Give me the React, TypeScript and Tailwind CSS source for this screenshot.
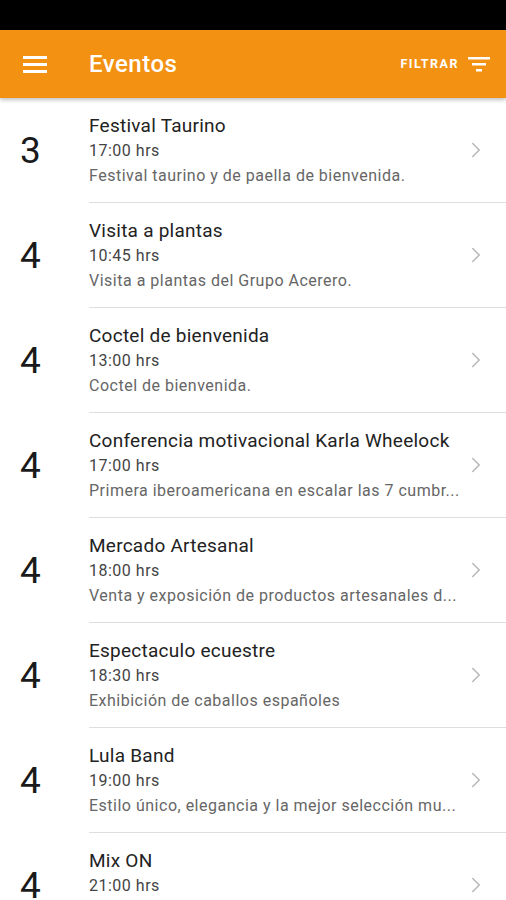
import { ChevronRight } from 'lucide-react';

const events = [
  { day: '3', title: 'Festival Taurino', time: '17:00 hrs', desc: 'Festival taurino y de paella de bienvenida.' },
  { day: '4', title: 'Visita a plantas', time: '10:45 hrs', desc: 'Visita a plantas del Grupo Acerero.' },
  { day: '4', title: 'Coctel de bienvenida', time: '13:00 hrs', desc: 'Coctel de bienvenida.' },
  { day: '4', title: 'Conferencia motivacional Karla Wheelock', time: '17:00 hrs', desc: 'Primera iberoamericana en escalar las 7 cumbr...' },
  { day: '4', title: 'Mercado Artesanal', time: '18:00 hrs', desc: 'Venta y exposición de productos artesanales d...' },
  { day: '4', title: 'Espectaculo ecuestre', time: '18:30 hrs', desc: 'Exhibición de caballos españoles' },
  { day: '4', title: 'Lula Band', time: '19:00 hrs', desc: 'Estilo único, elegancia y la mejor selección mu...' },
  { day: '4', title: 'Mix ON', time: '21:00 hrs', desc: '' },
];

const App = () => {
  return (
    <div className="w-[506px] h-[900px] overflow-hidden bg-white font-['Roboto',sans-serif]">
      {/* Status bar */}
      <div className="h-[30px] bg-black" />

      {/* Toolbar */}
      <header className="relative z-10 h-[68px] bg-[#f39112] flex items-center shadow-[0_2px_4px_rgba(0,0,0,0.25)]">
        <div className="w-[89px] pl-[23px]">
          <div className="flex flex-col gap-[4px] w-[24px]">
            <span className="h-[3px] bg-white" />
            <span className="h-[3px] bg-white" />
            <span className="h-[3px] bg-white" />
          </div>
        </div>
        <h1 className="text-white text-[24px] font-medium tracking-[0.5px] leading-none">Eventos</h1>
        <div className="ml-auto flex items-center pr-[16px]">
          <span className="text-white text-[12.5px] font-bold tracking-[1.5px]">FILTRAR</span>
          <svg width="22" height="15" viewBox="0 0 22 15" className="ml-[9px]">
            <rect x="0" y="0" width="22" height="2.5" fill="white" />
            <rect x="4" y="6" width="14" height="2.5" fill="white" />
            <rect x="8" y="12" width="6" height="2.5" fill="white" />
          </svg>
        </div>
      </header>

      {/* List */}
      <ul>
        {events.map((e, i) => (
          <li key={i} className="flex h-[105px]">
            <div className="w-[89px] flex items-center pl-[20px]">
              <span className="text-[37px] text-[#1a1a1a] leading-none">{e.day}</span>
            </div>
            <div className="flex-1 flex items-center border-b border-[#dedede] min-w-0">
              <div className="flex-1 min-w-0 pr-[6px]">
                <div className="h-[25px] text-[19px] tracking-[0.25px] leading-[25px] text-[#222] whitespace-nowrap">{e.title}</div>
                <div className="h-[25px] text-[16px] tracking-[0.5px] leading-[25px] text-[#444]">{e.time}</div>
                <div className="h-[25px] text-[16px] tracking-[0.5px] leading-[25px] text-[#666] whitespace-nowrap">{e.desc}</div>
              </div>
              <ChevronRight className="w-[26px] h-[26px] text-[#b8b8b8] mr-[17px] shrink-0" strokeWidth={1.4} />
            </div>
          </li>
        ))}
      </ul>
    </div>
  );
};

export default App;
